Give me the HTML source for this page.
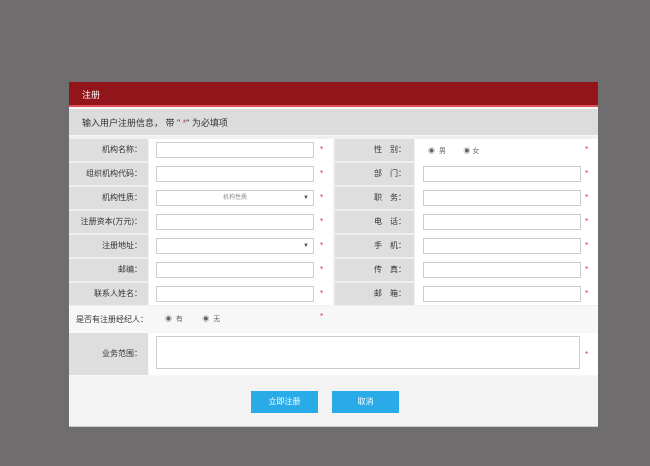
<!DOCTYPE html><html><head><meta charset="utf-8"><style>
body{margin:0;width:650px;height:466px;background:#6f6d6e;font-family:"Liberation Sans","Noto Sans CJK SC",sans-serif;position:relative;overflow:hidden}
.a{position:absolute}
.p{left:69px;top:82px;width:529px;height:344px;background:#f7f7f7}
.lb{background:#dedede;font-size:8px;color:#333;text-align:right;line-height:22px;height:22px}
.in{background:#fff;border:1px solid #ccc;height:14px}
.st{color:#d33;font-size:8px}
.r{font-size:7px;color:#666}
.btn{background:#29abe8;color:#fff;font-size:8px;text-align:center;line-height:22px;width:67px;height:22px}
</style></head><body>
<div class="a p"></div>
<div class="a" style="left:69px;top:82px;width:529px;height:24px;background:#91151a"></div>
<div class="a" style="left:69px;top:105px;width:529px;height:2px;background:#e2505a"></div>
<div class="a" style="left:82px;top:88px;color:#fff;font-size:9px">注册</div>
<div class="a" style="left:69px;top:109px;width:529px;height:26px;background:#dcdcdc"></div>
<div class="a" style="left:82px;top:116px;font-size:9px;color:#333">输入用户注册信息， 带 " <span style="color:#d33">*</span>" 为必填项</div>
<div class="a" style="left:69px;top:136px;width:529px;height:196px;background:#f0f0f0"></div>

<div class="a lb" style="left:69px;top:139px;width:79px"><span style="margin-right:6px">机构名称：</span></div>
<div class="a lb" style="left:69px;top:163px;width:79px"><span style="margin-right:6px">组织机构代码：</span></div>
<div class="a lb" style="left:69px;top:187px;width:79px"><span style="margin-right:6px">机构性质：</span></div>
<div class="a lb" style="left:69px;top:211px;width:79px"><span style="margin-right:6px">注册资本(万元)：</span></div>
<div class="a lb" style="left:69px;top:235px;width:79px"><span style="margin-right:6px">注册地址：</span></div>
<div class="a lb" style="left:69px;top:259px;width:79px"><span style="margin-right:6px">邮编：</span></div>
<div class="a lb" style="left:69px;top:283px;width:79px"><span style="margin-right:6px">联系人姓名：</span></div>

<div class="a" style="left:149px;top:139px;width:184px;height:166px;background:#fff"></div>
<div class="a in" style="left:156px;top:142px;width:156px"></div>
<div class="a in" style="left:156px;top:166px;width:156px"></div>
<div class="a in" style="left:156px;top:190px;width:156px;font-size:6px;color:#888;text-align:center;line-height:14px">机构性质<span style="position:absolute;right:4px;font-size:6px;color:#555">▼</span></div>
<div class="a in" style="left:156px;top:214px;width:156px"></div>
<div class="a in" style="left:156px;top:238px;width:156px"><span style="position:absolute;right:4px;font-size:6px;color:#555;line-height:14px">▼</span></div>
<div class="a in" style="left:156px;top:262px;width:156px"></div>
<div class="a in" style="left:156px;top:286px;width:156px"></div>
<div class="a st" style="left:320px;top:145px">*</div>
<div class="a st" style="left:320px;top:169px">*</div>
<div class="a st" style="left:320px;top:193px">*</div>
<div class="a st" style="left:320px;top:217px">*</div>
<div class="a st" style="left:320px;top:241px">*</div>
<div class="a st" style="left:320px;top:265px">*</div>
<div class="a st" style="left:320px;top:289px">*</div>

<div class="a lb" style="left:335px;top:139px;width:79px"><span style="margin-right:8px">性　别：</span></div>
<div class="a lb" style="left:335px;top:163px;width:79px"><span style="margin-right:8px">部　门：</span></div>
<div class="a lb" style="left:335px;top:187px;width:79px"><span style="margin-right:8px">职　务：</span></div>
<div class="a lb" style="left:335px;top:211px;width:79px"><span style="margin-right:8px">电　话：</span></div>
<div class="a lb" style="left:335px;top:235px;width:79px"><span style="margin-right:8px">手　机：</span></div>
<div class="a lb" style="left:335px;top:259px;width:79px"><span style="margin-right:8px">传　真：</span></div>
<div class="a lb" style="left:335px;top:283px;width:79px"><span style="margin-right:8px">邮　箱：</span></div>
<div class="a" style="left:415px;top:139px;width:183px;height:166px;background:#fff"></div>
<div class="a r" style="left:428px;top:146px">◉&nbsp;&nbsp;男&nbsp;&nbsp;&nbsp;&nbsp;&nbsp;&nbsp;&nbsp;&nbsp;&nbsp;◉&nbsp;女</div>
<div class="a in" style="left:423px;top:166px;width:156px"></div>
<div class="a in" style="left:423px;top:190px;width:156px"></div>
<div class="a in" style="left:423px;top:214px;width:156px"></div>
<div class="a in" style="left:423px;top:238px;width:156px"></div>
<div class="a in" style="left:423px;top:262px;width:156px"></div>
<div class="a in" style="left:423px;top:286px;width:156px"></div>
<div class="a st" style="left:585px;top:145px">*</div>
<div class="a st" style="left:585px;top:169px">*</div>
<div class="a st" style="left:585px;top:193px">*</div>
<div class="a st" style="left:585px;top:217px">*</div>
<div class="a st" style="left:585px;top:241px">*</div>
<div class="a st" style="left:585px;top:265px">*</div>
<div class="a st" style="left:585px;top:289px">*</div>
<div class="a" style="left:69px;top:306px;width:529px;height:26px;background:#f7f7f7"></div>
<div class="a" style="left:76px;top:314px;font-size:8px;color:#333">是否有注册经纪人：</div>
<div class="a r" style="left:165px;top:314px">◉&nbsp;&nbsp;有&nbsp;&nbsp;&nbsp;&nbsp;&nbsp;&nbsp;&nbsp;&nbsp;&nbsp;&nbsp;◉&nbsp;&nbsp;无</div>
<div class="a st" style="left:320px;top:312px">*</div>
<div class="a lb" style="left:69px;top:333px;width:79px;height:42px;line-height:42px"><span style="margin-right:6px">业务范围：</span></div>
<div class="a" style="left:149px;top:333px;width:449px;height:42px;background:#fff"></div>
<div class="a in" style="left:156px;top:336px;width:422px;height:31px"></div>
<div class="a st" style="left:585px;top:350px">*</div>
<div class="a" style="left:69px;top:376px;width:529px;height:50px;background:#f3f3f3;border-bottom:1px solid #ccc"></div>
<div class="a btn" style="left:251px;top:391px">立即注册</div>
<div class="a btn" style="left:332px;top:391px">取消</div>
</body></html>
